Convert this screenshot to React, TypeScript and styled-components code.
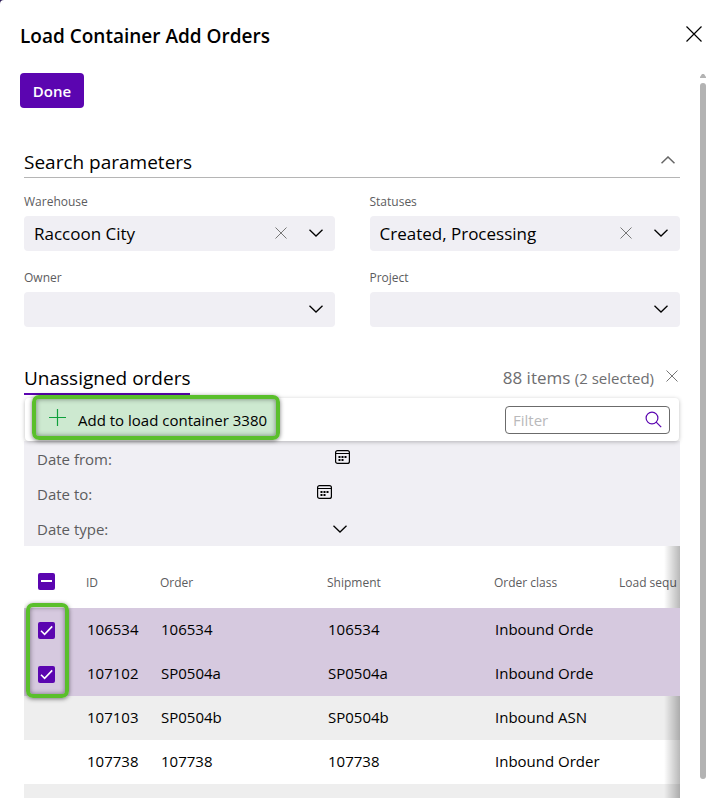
import React from "react";
import styled, { createGlobalStyle } from "styled-components";

const purple = "#5b05b0";
const green = "#5abf2b";
const muted = "#5c5c5e";

const GlobalStyle = createGlobalStyle`
  *, *::before, *::after { box-sizing: border-box; }
  body {
    margin: 0;
    background: #2b1a55;
    color: #000;
    font: 15px/20px "Open Sans", "Noto Sans", sans-serif;
  }
  button, input, select { font: inherit; color: inherit; margin: 0; }
`;

const Dialog = styled.main`
  display: flex;
  flex-direction: column;
  height: 100vh;
  overflow: hidden;
  background: #fff;
  border-top-left-radius: 4px;
`;

const DialogHeader = styled.header`
  display: flex;
  flex: none;
  align-items: flex-start;
  justify-content: space-between;
  height: 73px;
  padding: 22px 18px 0 20px;
`;

const Title = styled.h1`
  margin: 0;
  font-size: 19px;
  line-height: 28px;
  font-weight: 600;
`;

const IconButton = styled.button<{ $tone?: string }>`
  display: flex;
  align-items: center;
  justify-content: center;
  width: 24px;
  height: 24px;
  padding: 0;
  border: 0;
  background: none;
  color: ${(p) => p.$tone ?? "#000"};
  cursor: pointer;
`;

const CalendarButton = styled(IconButton)`
  padding-bottom: 4px;
`;

const DialogBody = styled.div`
  display: flex;
  flex: 1;
  min-height: 0;
  padding: 0 18px 0 20px;
`;

const Content = styled.div`
  flex: 1;
  min-width: 0;
  overflow: hidden;
`;

const ScrollBar = styled.div`
  display: flex;
  flex: none;
  flex-direction: column;
  gap: 4px;
  width: 6px;
  margin-left: 16px;
  padding-bottom: 19px;
`;

const ScrollThumb = styled.div`
  flex: 1;
  border-radius: 3px;
  background: #b3b3b3;
`;

const DoneButton = styled.button`
  display: block;
  width: 64px;
  height: 35px;
  padding: 0;
  border: 0;
  border-radius: 4px;
  background: ${purple};
  color: #fff;
  font-weight: 600;
  cursor: pointer;
`;

const Section = styled.section<{ $top: number }>`
  margin-top: ${(p) => p.$top}px;
  padding: 0 4px;
`;

const SectionHeader = styled.div`
  display: flex;
  align-items: flex-start;
  justify-content: space-between;
  height: 32px;
  padding-top: 2px;
  border-bottom: 1px solid #b5b5b5;
`;

const SectionTitle = styled.h2`
  margin: 0;
  font-size: 19px;
  line-height: 28px;
  font-weight: 400;
`;

const Fields = styled.div`
  display: grid;
  grid-template-columns: 1fr 1fr;
  gap: 17px 35px;
  padding-top: 14px;
`;

const Label = styled.label`
  display: block;
  margin-bottom: 4px;
  color: ${muted};
  font-size: 12px;
  line-height: 20px;
`;

const SelectBox = styled.div`
  position: relative;
  height: 35px;
`;

const Select = styled.select`
  display: block;
  width: 100%;
  height: 100%;
  padding: 0 72px 0 10px;
  border: 0;
  border-radius: 4px;
  background: #f0eff4;
  font-size: 17px;
  appearance: none;
`;

const SelectIcons = styled.div`
  position: absolute;
  top: 0;
  right: 7px;
  bottom: 2px;
  display: flex;
  align-items: center;
  gap: 11px;
  pointer-events: none;
`;

const ArrowSlot = styled.span`
  display: flex;
  justify-content: center;
  width: 24px;
`;

const ListHeader = styled.div`
  display: flex;
  align-items: flex-start;
  justify-content: space-between;
  height: 34px;
`;

const ListTitle = styled.h2`
  height: 31px;
  margin: 0;
  border-bottom: 2px solid ${purple};
  font-size: 19px;
  line-height: 28px;
  font-weight: 400;
`;

const ListSummary = styled.div`
  display: flex;
  gap: 6px;
  margin-right: -4px;
  color: #6e6e70;
`;

const Count = styled.span`
  font-size: 17px;
  line-height: 28px;
`;

const Selected = styled.span`
  font-size: 15px;
`;

const Toolbar = styled.div`
  position: relative;
  z-index: 1;
  display: flex;
  align-items: center;
  justify-content: space-between;
  height: 43px;
  margin: 0 1px;
  padding: 0 9px 0 11px;
  border-radius: 4px;
  background: #fff;
  box-shadow: 0 1px 4px rgba(0, 0, 0, 0.26);
`;

const Highlight = styled.div`
  border: 4px solid ${green};
  border-radius: 7px;
  box-shadow: 0 1px 4px rgba(0, 0, 0, 0.5), inset 0 0 5px rgba(0, 0, 0, 0.45);
  pointer-events: none;
`;

const ActionHighlight = styled(Highlight)`
  position: absolute;
  inset: -4px;
`;

const RowsHighlight = styled(Highlight)`
  position: absolute;
  z-index: 3;
  top: 57px;
  left: 2px;
  width: 43px;
  height: 95px;
`;

const ActionButton = styled.button`
  position: relative;
  display: flex;
  align-items: center;
  align-self: flex-start;
  gap: 12px;
  height: 37px;
  margin-top: 1px;
  padding: 4px 9px 0 13px;
  border: 0;
  background: #cde9d0;
  cursor: pointer;
`;

const FilterBox = styled.div`
  display: flex;
  align-items: center;
  width: 165px;
  height: 28px;
  padding: 0 4px 0 7px;
  border: 1px solid #6b6b6b;
  border-radius: 4px;
`;

const FilterInput = styled.input`
  flex: 1;
  min-width: 0;
  padding: 0;
  border: 0;
  outline: 0;
  background: none;
  &::placeholder { color: #b9b9bb; opacity: 1; }
`;

const DatePanel = styled.div`
  background: #f0eff4;
`;

const DateRow = styled.div`
  display: flex;
  align-items: center;
  height: 35px;
  padding: 0 13px;
`;

const DateLabel = styled.label`
  width: 104px;
  color: ${muted};
`;

const DateInput = styled.input<{ $width: number }>`
  width: ${(p) => p.$width}px;
  padding: 0 4px;
  border: 0;
  outline: 0;
  background: none;
`;

const TypeBox = styled.div`
  position: relative;
  width: 212px;
  height: 24px;
`;

const TypeSelect = styled.select`
  width: 100%;
  height: 100%;
  padding: 0 24px 0 4px;
  border: 0;
  background: none;
  appearance: none;
`;

const TypeArrow = styled(ArrowSlot)`
  position: absolute;
  top: 8px;
  right: 1px;
  pointer-events: none;
`;

const TableArea = styled.div`
  position: relative;
  overflow: hidden;
  &::after {
    content: "";
    position: absolute;
    z-index: 1;
    top: 0;
    right: 0;
    bottom: 0;
    width: 16px;
    background: linear-gradient(to right, rgba(0, 0, 0, 0), rgba(0, 0, 0, 0.28));
    pointer-events: none;
  }
`;

const Table = styled.table`
  width: 760px;
  min-width: 100%;
  table-layout: fixed;
  border-collapse: collapse;
`;

const HeadCell = styled.th<{ $width?: number }>`
  width: ${(p) => (p.$width ? `${p.$width}px` : "auto")};
  height: 62px;
  padding: 12px 0 0;
  color: ${muted};
  font-size: 12px;
  font-weight: 400;
  text-align: left;
`;

const CheckHeadCell = styled(HeadCell)`
  padding: 9px 0 0 14px;
`;

const Row = styled.tr<{ $selected?: boolean }>`
  background: ${(p) => (p.$selected ? "#d6c9df" : "#fff")};
  ${(p) =>
    p.$selected
      ? "position: relative; z-index: 2;"
      : "&:nth-child(odd) { background: #eee; }"}
`;

const Cell = styled.td`
  height: 44px;
  padding: 0 0 2px 1px;
  white-space: nowrap;
`;

const CheckCell = styled.td`
  height: 44px;
  padding: 0 0 0 14px;
`;

const CheckLabel = styled.label`
  position: relative;
  display: block;
  width: 17px;
  height: 17px;
  svg {
    position: absolute;
    inset: 0;
    pointer-events: none;
  }
`;

const CheckBox = styled.input`
  display: block;
  width: 17px;
  height: 17px;
  margin: 0;
  border-radius: 2px;
  appearance: none;
  &:checked, &:indeterminate { background: ${purple}; }
`;

const Cross = ({ size, weight = 1 }: { size: number; weight?: number }) => (
  <svg width={size} height={size} viewBox={`0 0 ${size} ${size}`} fill="none" stroke="currentColor" strokeWidth={weight} aria-hidden="true">
    <path d={`M.5 .5 L${size - 0.5} ${size - 0.5} M${size - 0.5} .5 L.5 ${size - 0.5}`} />
  </svg>
);

const Chevron = ({ up }: { up?: boolean }) => (
  <svg width="14" height="8" viewBox="0 0 14 8" fill="none" stroke="currentColor" strokeWidth={up ? 1.5 : 1.3} aria-hidden="true">
    <path d={up ? "M.5 7.3 L7 1 L13.5 7.3" : "M.5 .7 L7 7 L13.5 .7"} />
  </svg>
);

const Calendar = () => (
  <svg width="15" height="14" viewBox="0 0 15 14" fill="none" aria-hidden="true">
    <rect x=".6" y=".6" width="13.8" height="12.8" rx="2" stroke="#000" strokeWidth="1.2" />
    <path d="M1 3.5H14" stroke="#000" />
    <path d="M3 6h2v2H3zM6 6h2v2H6zM9 6h2v2H9zM3 9h2v2H3zM6 9h2v2H6z" fill="#000" transform="translate(.5 0)" />
  </svg>
);

const Search = () => (
  <svg width="17" height="17" viewBox="0 0 17 17" fill="none" stroke={purple} strokeWidth="1.2" aria-hidden="true">
    <circle cx="7" cy="7" r="5.9" />
    <path d="M11.2 11.2 L16.2 16.2" />
  </svg>
);

const Plus = () => (
  <svg width="17" height="21" viewBox="0 0 17 21" fill="none" stroke="#0fa03c" aria-hidden="true">
    <path d="M8.5 0V17M0 8.5H17" strokeWidth="1.2" />
  </svg>
);

const fields = [
  { id: "warehouse", label: "Warehouse", value: "Raccoon City" },
  { id: "statuses", label: "Statuses", value: "Created, Processing" },
  { id: "owner", label: "Owner", value: "" },
  { id: "project", label: "Project", value: "" },
];

const orders = [
  { id: "106534", order: "106534", shipment: "106534", kind: "Inbound Orde", selected: true },
  { id: "107102", order: "SP0504a", shipment: "SP0504a", kind: "Inbound Orde", selected: true },
  { id: "107103", order: "SP0504b", shipment: "SP0504b", kind: "Inbound ASN", selected: false },
  { id: "107738", order: "107738", shipment: "107738", kind: "Inbound Order", selected: false },
];

const markPartial = (el: HTMLInputElement | null) => {
  if (el) el.indeterminate = true;
};

export default function App() {
  return (
    <>
      <GlobalStyle />
      <Dialog>
        <DialogHeader>
          <Title>Load Container Add Orders</Title>
          <IconButton aria-label="Close"><Cross size={16} weight={1.2} /></IconButton>
        </DialogHeader>
        <DialogBody>
          <Content>
            <DoneButton>Done</DoneButton>

            <Section $top={38}>
              <SectionHeader>
                <SectionTitle>Search parameters</SectionTitle>
                <IconButton $tone="#666" aria-label="Collapse"><Chevron up /></IconButton>
              </SectionHeader>
              <Fields>
                {fields.map((f) => (
                  <div key={f.id}>
                    <Label htmlFor={f.id}>{f.label}</Label>
                    <SelectBox>
                      <Select id={f.id} defaultValue={f.value}>
                        <option value={f.value}>{f.value}</option>
                      </Select>
                      <SelectIcons>
                        {f.value && (
                          <IconButton $tone="#777" aria-label={`Clear ${f.label}`}><Cross size={12} /></IconButton>
                        )}
                        <ArrowSlot><Chevron /></ArrowSlot>
                      </SelectIcons>
                    </SelectBox>
                  </div>
                ))}
              </Fields>
            </Section>

            <Section $top={37}>
              <ListHeader>
                <ListTitle>Unassigned orders</ListTitle>
                <ListSummary>
                  <Count>88 items <Selected>(2 selected)</Selected></Count>
                  <IconButton $tone="#777" aria-label="Clear selection"><Cross size={12} /></IconButton>
                </ListSummary>
              </ListHeader>
              <Toolbar>
                <ActionButton>
                  <Plus />
                  Add to load container 3380
                  <ActionHighlight as="span" />
                </ActionButton>
                <FilterBox>
                  <FilterInput placeholder="Filter" aria-label="Filter" />
                  <IconButton aria-label="Search"><Search /></IconButton>
                </FilterBox>
              </Toolbar>
              <DatePanel>
                <DateRow>
                  <DateLabel htmlFor="from">Date from:</DateLabel>
                  <DateInput id="from" $width={189} />
                  <CalendarButton aria-label="Pick start date"><Calendar /></CalendarButton>
                </DateRow>
                <DateRow>
                  <DateLabel htmlFor="to">Date to:</DateLabel>
                  <DateInput id="to" $width={171} />
                  <CalendarButton aria-label="Pick end date"><Calendar /></CalendarButton>
                </DateRow>
                <DateRow>
                  <DateLabel htmlFor="type">Date type:</DateLabel>
                  <TypeBox>
                    <TypeSelect id="type"><option value="" /></TypeSelect>
                    <TypeArrow><Chevron /></TypeArrow>
                  </TypeBox>
                </DateRow>
              </DatePanel>
              <TableArea>
                <Table>
                  <thead>
                    <tr>
                      <CheckHeadCell $width={62}>
                        <CheckLabel>
                          <CheckBox type="checkbox" ref={markPartial} aria-label="Select all" />
                          <svg viewBox="0 0 17 17" aria-hidden="true"><path d="M3 8H14" stroke="#fff" strokeWidth="2" /></svg>
                        </CheckLabel>
                      </CheckHeadCell>
                      <HeadCell $width={74}>ID</HeadCell>
                      <HeadCell $width={167}>Order</HeadCell>
                      <HeadCell $width={167}>Shipment</HeadCell>
                      <HeadCell $width={125}>Order class</HeadCell>
                      <HeadCell>Load sequ</HeadCell>
                    </tr>
                  </thead>
                  <tbody>
                    {orders.map((o) => (
                      <Row key={o.id} $selected={o.selected}>
                        <CheckCell>
                          <CheckLabel>
                            <CheckBox type="checkbox" defaultChecked={o.selected} aria-label={`Select ${o.id}`} />
                            {o.selected && (
                              <svg viewBox="0 0 17 17" fill="none" aria-hidden="true"><path d="M3 8.8 L6.6 12.4 L14.2 4.4" stroke="#fff" strokeWidth="1.6" /></svg>
                            )}
                          </CheckLabel>
                        </CheckCell>
                        <Cell>{o.id}</Cell>
                        <Cell>{o.order}</Cell>
                        <Cell>{o.shipment}</Cell>
                        <Cell>{o.kind}</Cell>
                        <Cell />
                      </Row>
                    ))}
                    <Row><Cell colSpan={6} /></Row>
                  </tbody>
                </Table>
                <RowsHighlight />
              </TableArea>
            </Section>
          </Content>
          <ScrollBar aria-hidden="true">
            <svg width="6" height="6" viewBox="0 0 6 6"><path d="M2 1 H4 L6 4 V5 H0 V4 Z" fill="#b3b3b3" /></svg>
            <ScrollThumb />
          </ScrollBar>
        </DialogBody>
      </Dialog>
    </>
  );
}
